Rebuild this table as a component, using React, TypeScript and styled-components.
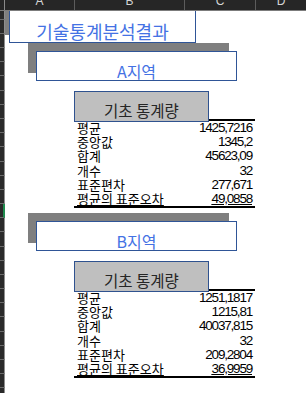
import React from 'react';
import styled, { createGlobalStyle } from 'styled-components';

const ROW_H = 14.18;

const GlobalStyle = createGlobalStyle`
  html, body {
    margin: 0;
    padding: 0;
    background: #ffffff;
    overflow: hidden;
  }
  body {
    font-family: 'Noto Sans CJK KR', 'Noto Sans', sans-serif;
  }
`;

const Page = styled.div`
  width: 306px;
  height: 393px;
  display: flex;
  flex-direction: column;
  overflow: hidden;
  background: #ffffff;
`;

const ColumnBar = styled.div`
  height: 11px;
  flex: none;
  display: grid;
  grid-template-columns: 5px 69px 110px 71px 1fr;
  background: #262626;
  border-bottom: 1px solid #7c7c7c;
  box-sizing: border-box;
  overflow: hidden;
`;

const Corner = styled.div`
  border-right: 1px solid #8a8a8a;
`;

const ColumnCell = styled.div<{ $first?: boolean }>`
  display: flex;
  justify-content: center;
  align-items: flex-start;
  overflow: hidden;
  border-left: ${(p) => (p.$first ? 'none' : '1px solid #5c5c5c')};
  color: #d4d4d4;
  font-family: 'Liberation Sans', Arial, sans-serif;
  font-size: 12px;
  line-height: 12px;
  span {
    margin-top: -5px;
  }
`;

const Body = styled.div`
  flex: 1;
  display: flex;
  overflow: hidden;
`;

const RowHeaders = styled.div`
  width: 5px;
  flex: none;
  display: flex;
  flex-direction: column;
  margin-top: -5.4px;
`;

const RowHead = styled.div<{ $selected?: boolean }>`
  height: ${ROW_H}px;
  flex: none;
  box-sizing: border-box;
  background: #2a2a2a;
  border-bottom: 1px solid #6a6a6a;
  border-right: ${(p) => (p.$selected ? '2px solid #1f8c4e' : '1px solid #8e8e8e')};
`;

const Sheet = styled.div`
  flex: 1;
  display: flex;
  flex-direction: column;
  align-items: flex-start;
  overflow: hidden;
`;

const TitleBox = styled.div`
  margin-left: 4px;
  width: 187px;
  height: 32px;
  box-sizing: border-box;
  border: 1px solid #2f5597;
  border-top: none;
  background: #ffffff;
  box-shadow: -8px -8px 0 #7f7f7f;
  padding-top: 10px;
  text-align: center;
  color: #4472e4;
  font-size: 18px;
  line-height: 20px;
`;

const RegionBox = styled.div<{ $gap: number }>`
  margin-top: ${(p) => p.$gap}px;
  margin-left: 31px;
  width: 201px;
  height: 30px;
  box-sizing: border-box;
  border: 1px solid #2f5597;
  background: #ffffff;
  box-shadow: -8px -8px 0 #7f7f7f;
  padding-top: 10px;
  text-align: center;
  color: #4472e4;
  font-size: 16px;
  line-height: 18px;
`;

const StatsHeader = styled.div`
  position: relative;
  z-index: 1;
  margin-top: 10px;
  margin-left: 69px;
  margin-bottom: -3px;
  width: 135px;
  height: 31px;
  box-sizing: border-box;
  border: 1px solid #2f528f;
  background: #bfbfbf;
  padding-top: 9px;
  text-align: center;
  color: #262626;
  font-size: 15.5px;
  line-height: 18px;
`;

const StatsTable = styled.div`
  margin-left: 69px;
  width: 181px;
  border-top: 2px solid #000000;
  border-bottom: 2px solid #000000;
  display: flex;
  flex-direction: column;
`;

const StatRow = styled.div<{ $last?: boolean }>`
  height: ${ROW_H}px;
  display: flex;
  justify-content: space-between;
  align-items: flex-start;
  padding: 0 3px;
  color: #000000;
  text-decoration: ${(p) => (p.$last ? 'underline' : 'none')};
  text-underline-offset: 1px;
`;

const Label = styled.span`
  font-size: 13px;
  line-height: 14px;
  text-decoration: inherit;
`;

const Value = styled.span`
  font-family: 'Liberation Sans', Arial, sans-serif;
  font-size: 13.5px;
  line-height: 14px;
  letter-spacing: -1.2px;
  text-decoration: inherit;
`;

const LABELS = ['평균', '중앙값', '합계', '개수', '표준편차', '평균의 표준오차'];

const regions = [
  { name: 'A지역', gap: 8, values: ['1425,7216', '1345,2', '45623,09', '32', '277,671', '49,0858'] },
  { name: 'B지역', gap: 13, values: ['1251,1817', '1215,81', '40037,815', '32', '209,2804', '36,9959'] },
];

const Region = ({ name, gap, values }: { name: string; gap: number; values: string[] }) => (
  <>
    <RegionBox $gap={gap}>{name}</RegionBox>
    <StatsHeader>기초 통계량</StatsHeader>
    <StatsTable>
      {LABELS.map((label, i) => (
        <StatRow key={label} $last={i === LABELS.length - 1}>
          <Label>{label}</Label>
          <Value>{values[i]}</Value>
        </StatRow>
      ))}
    </StatsTable>
  </>
);

const App = () => {
  return (
    <Page>
      <GlobalStyle />
      <ColumnBar>
        <Corner />
        <ColumnCell $first><span>A</span></ColumnCell>
        <ColumnCell><span>B</span></ColumnCell>
        <ColumnCell><span>C</span></ColumnCell>
        <ColumnCell><span>D</span></ColumnCell>
      </ColumnBar>
      <Body>
        <RowHeaders>
          {Array.from({ length: 29 }).map((_, i) => (
            <RowHead key={i} $selected={i === 14} />
          ))}
        </RowHeaders>
        <Sheet>
          <TitleBox>기술통계분석결과</TitleBox>
          {regions.map((r) => (
            <Region key={r.name} {...r} />
          ))}
        </Sheet>
      </Body>
    </Page>
  );
};

export default App;
